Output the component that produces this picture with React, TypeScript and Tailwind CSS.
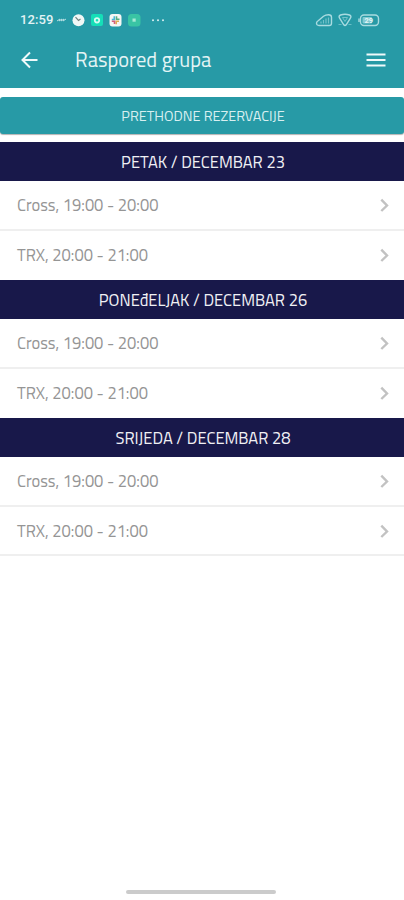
import React from "react";

const days = ["PETAK / DECEMBAR 23", "PONEđELJAK / DECEMBAR 26", "SRIJEDA / DECEMBAR 28"];

function Row({ children, line }: { children: React.ReactNode; line: boolean }) {
  return (
    <div className={`flex h-[49.5px] items-center justify-between border-b-2 pl-[17px] pr-[14px] ${line ? "border-[#efefef]" : "border-white"}`}>
      <span className="text-[16.5px] leading-[20px] text-[#959595]">{children}</span>
      <svg width="11" height="14" viewBox="0 0 11 14" fill="none" stroke="#c2c2c2" strokeWidth="2.4">
        <path d="M2.3 1.7 8 7.500l-5.7 5.500" />
      </svg>
    </div>
  );
}

function StatusBar() {
  return (
    <div className="flex h-10 items-center pl-[20px] pr-[24px] text-white">
      <span className="w-[34px] whitespace-nowrap font-[Roboto] text-[13px] font-medium leading-[16px] tracking-[0.1px] text-[#e2f3f5]">12:59</span>
      <svg className="ml-[2px]" width="112" height="16" viewBox="0 0 112 16" fill="none">
        <path d="m1 9 3-2-1 2 3-2-1 2 3-2-1 2 3-2" stroke="#b5dfe3" strokeWidth="1" />
        <circle cx="22.5" cy="8.2" r="6" fill="#f1f7f6" />
        <path d="m19.5 5.2 3 3.2 2-1.5" stroke="#74817f" strokeWidth="1.2" />
        <rect x="35" y="2" width="12" height="12" rx="2" fill="#15dfb8" />
        <circle cx="41" cy="8.3" r="2.2" stroke="#d4fbf1" strokeWidth="1.8" />
        <rect x="53.5" y="2" width="12" height="12.5" rx="3" fill="#f5f7f5" />
        <path d="M58.3 4.3v3.2h-2.5" stroke="#47b6d7" strokeWidth="1.6" />
        <path d="M60.5 4.3v3h3" stroke="#55ad83" strokeWidth="1.6" />
        <path d="M63 9.2h-2.8v3" stroke="#dfad52" strokeWidth="1.6" />
        <path d="M58.5 12V9.2h-2.7" stroke="#d3617d" strokeWidth="1.6" />
        <rect x="72" y="2" width="12.5" height="12.5" rx="3.5" fill="#39c4a4" />
        <path d="M76.5 6.500h3.2v3.2h-3.2z" fill="#a5ead6" />
        <g fill="#d9f0f2">
          <circle cx="97" cy="8.3" r="1" />
          <circle cx="102" cy="8.3" r="1" />
          <circle cx="107" cy="8.3" r="1" />
        </g>
      </svg>
      <svg className="ml-auto" width="65" height="16" viewBox="0 0 65 16" fill="none" stroke="#a9dbe0" strokeWidth="1.4">
        <path d="M3.500 8.500 8.500 4.200Q10.500 2.800 13.500 2.800q3 0 3 2.500v6q0 2.200-2.200 2.200H4Q1.500 13.500 1.500 11 1.500 9.800 3.500 8.500Z" />
        <path d="M6 11.500v-2M8.500 11.500V8M11 11.500V6.500M13.500 11.500V5.500" stroke="#72c2c9" strokeWidth="1.2" />
        <path d="M25.500 3Q30 1.600 34.500 3q2.300 1 .9 3.200L31.200 12.800q-1.200 1.400-2.400 0L24.600 6.200Q23.200 4 25.500 3Z" />
        <path d="M27.500 5.500h5L30 9.500Z" stroke="#72c2c9" strokeWidth="1" />
        <path d="M23.500 12.500h3m7 0h3" stroke="#69bec6" strokeWidth="1" />
        <rect x="45.500" y="3" width="18" height="10.500" rx="3.500" />
        <path d="M44 6.500v3.500" />
        <rect x="47.500" y="5" width="9.500" height="6.500" rx="1" fill="#82cad1" stroke="none" />
        <text x="49.500" y="11" fontSize="7.500" fontFamily="Roboto, sans-serif" fontWeight="700" fill="#e2f5f6" stroke="none">29</text>
      </svg>
    </div>
  );
}

export default function App() {
  return (
    <div className="flex h-[900px] w-full flex-col overflow-hidden bg-white font-['Titillium_Web',Roboto,sans-serif]">
      <header className="h-[88px] shrink-0 bg-[#279aa6]">
        <StatusBar />
        <div className="flex h-[39px] items-center pl-[21px] pr-[18px]">
          <svg width="18" height="18" viewBox="0 0 18 18" fill="none" stroke="#f0fafb" strokeWidth="2">
            <path d="M16.500 9H2M9 1.500 1.500 9 9 16.500" />
          </svg>
          <h1 className="ml-[36px] whitespace-nowrap text-[20.5px] font-normal leading-[26px] text-[#e4f4f5]">Raspored grupa</h1>
          <svg className="ml-auto" width="20" height="14" viewBox="0 0 20 14" fill="none" stroke="#f0fafb" strokeWidth="2">
            <path d="M.5 1.500h19M.5 7h19M.5 12.500h19" />
          </svg>
        </div>
      </header>
      <button className="mt-[9px] flex h-[37px] w-full shrink-0 items-center justify-center rounded-[3px] bg-[#279aa6] pl-[2px] text-[14.4px] leading-[18px] text-[#d8eff1] shadow-[0_1px_1px_rgba(0,0,0,0.3)]">
        PRETHODNE REZERVACIJE
      </button>
      <main className="mt-[8.4px]">
        {days.map((day, index) => (
          <section key={day}>
            <h2 className="flex h-[39px] items-center justify-center bg-[#18184a] pl-[2px] text-[16.5px] font-normal leading-[20px] text-[#f0f0f4]">
              {day}
            </h2>
            <Row line>Cross, 19:00 - 20:00</Row>
            <Row line={index === days.length - 1}>TRX, 20:00 - 21:00</Row>
          </section>
        ))}
      </main>
      <div className="mb-[6px] ml-[126px] mt-auto h-[4px] w-[150px] rounded-full bg-[#cbcbcb]" />
    </div>
  );
}
